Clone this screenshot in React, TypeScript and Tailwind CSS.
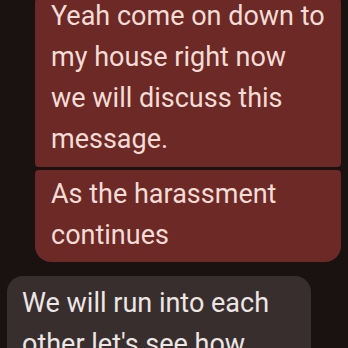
export default function App() {
  return (
    <div className="w-[348px] h-[348px] overflow-hidden bg-[#1a1211] font-['Roboto','Liberation_Sans',sans-serif]">
      <div className="flex flex-col -mt-[12px]">
        <div className="flex flex-col items-end gap-[3px] pr-[7px]">
          <div className="w-[306px] bg-[#6c2925] text-[#f4dcd6] text-[27px] leading-[41px] pl-[16px] pr-[8px] pt-[8px] pb-[7px] rounded-t-[16px] rounded-b-[4px]">
            Yeah come on down to
            <br />
            my house right now
            <br />
            we will discuss this
            <br />
            message.
          </div>
          <div className="w-[306px] bg-[#6c2925] text-[#f4dcd6] text-[27px] leading-[41px] pl-[16px] pr-[8px] pt-[4px] pb-[6px] rounded-t-[4px] rounded-b-[16px]">
            As the harassment
            <br />
            continues
          </div>
        </div>
        <div className="pl-[7px] mt-[14px]">
          <div className="w-[304px] bg-[#372e2d] text-[#ede6e4] text-[27px] leading-[41px] pl-[15px] pr-[8px] pt-[7px] pb-[10px] rounded-[16px]">
            We will run into each
            <br />
            other let's see how
          </div>
        </div>
      </div>
    </div>
  );
}
